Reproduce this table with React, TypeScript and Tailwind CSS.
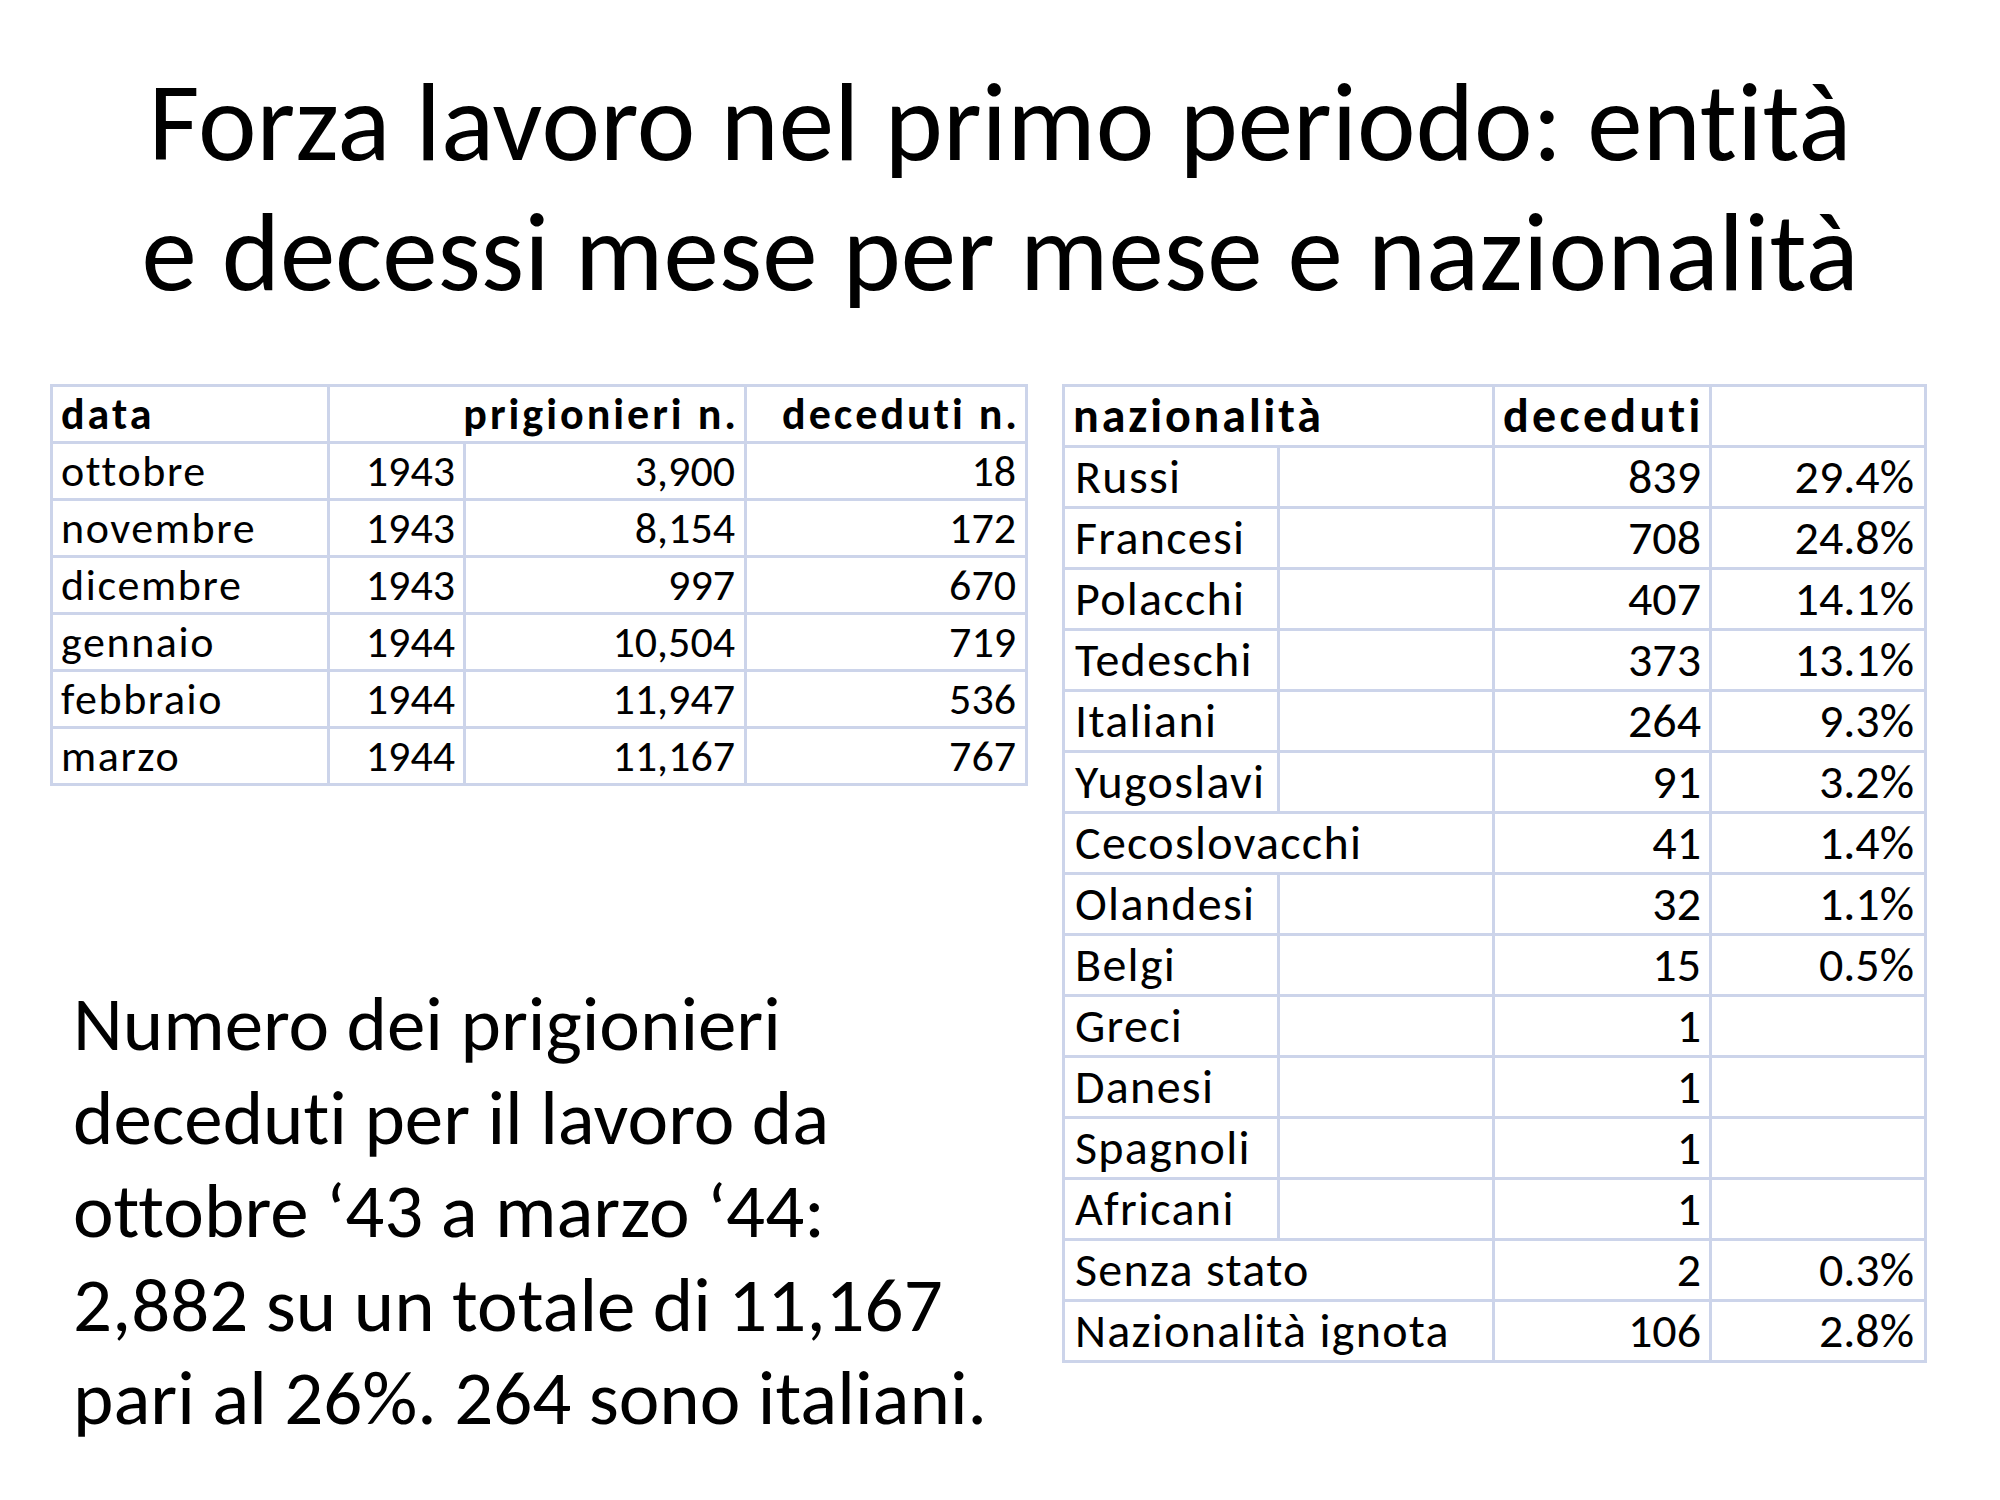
import React from 'react';

const font = "font-[Carlito,Lato,sans-serif] [font-variant-ligatures:none]";

const months = [
  { month: 'ottobre', year: '1943', prisoners: '3,900', dead: '18' },
  { month: 'novembre', year: '1943', prisoners: '8,154', dead: '172' },
  { month: 'dicembre', year: '1943', prisoners: '997', dead: '670' },
  { month: 'gennaio', year: '1944', prisoners: '10,504', dead: '719' },
  { month: 'febbraio', year: '1944', prisoners: '11,947', dead: '536' },
  { month: 'marzo', year: '1944', prisoners: '11,167', dead: '767' },
];

// wide = name spans the first two columns
const nations = [
  { name: 'Russi', dead: '839', pct: '29.4%' },
  { name: 'Francesi', dead: '708', pct: '24.8%' },
  { name: 'Polacchi', dead: '407', pct: '14.1%' },
  { name: 'Tedeschi', dead: '373', pct: '13.1%' },
  { name: 'Italiani', dead: '264', pct: '9.3%' },
  { name: 'Yugoslavi', dead: '91', pct: '3.2%' },
  { name: 'Cecoslovacchi', dead: '41', pct: '1.4%', wide: true },
  { name: 'Olandesi', dead: '32', pct: '1.1%' },
  { name: 'Belgi', dead: '15', pct: '0.5%' },
  { name: 'Greci', dead: '1', pct: '' },
  { name: 'Danesi', dead: '1', pct: '' },
  { name: 'Spagnoli', dead: '1', pct: '' },
  { name: 'Africani', dead: '1', pct: '' },
  { name: 'Senza stato', dead: '2', pct: '0.3%', wide: true },
  { name: 'Nazionalità ignota', dead: '106', pct: '2.8%', wide: true },
];

function MonthTable() {
  const cell = 'bg-white flex items-center whitespace-nowrap';
  return (
    <div className="grid grid-cols-[274px_133px_278px_278px] auto-rows-[54px] gap-[3px] p-[3px] bg-[#ccd4ea] text-[44px] text-black w-fit">
      <div className={`${cell} pl-[8px] font-bold tracking-[3px]`}>data</div>
      <div className={`${cell} col-span-2 justify-end pr-[5px] font-bold tracking-[3px]`}>prigionieri n.</div>
      <div className={`${cell} justify-end pr-[5px] font-bold tracking-[3px]`}>deceduti n.</div>
      {months.map((m) => (
        <React.Fragment key={m.month}>
          <div className={`${cell} pl-[8px] tracking-[1.6px]`}>{m.month}</div>
          <div className={`${cell} justify-end pr-[8px]`}>{m.year}</div>
          <div className={`${cell} justify-end pr-[9px]`}>{m.prisoners}</div>
          <div className={`${cell} justify-end pr-[9px]`}>{m.dead}</div>
        </React.Fragment>
      ))}
    </div>
  );
}

function NationTable() {
  const cell = 'bg-white flex items-center whitespace-nowrap';
  return (
    <div className="grid grid-cols-[212px_212px_214px_212px] auto-rows-[58px] gap-[3px] p-[3px] bg-[#ccd4ea] text-[48px] text-black w-fit">
      <div className={`${cell} col-span-2 pl-[8px] font-bold tracking-[2.9px]`}>nazionalità</div>
      <div className={`${cell} pl-[8px] font-bold tracking-[3.3px]`}>deceduti</div>
      <div className={cell} />
      {nations.map((n) => (
        <React.Fragment key={n.name}>
          {n.wide ? (
            <div className={`${cell} col-span-2 pl-[10px] tracking-[1.3px]`}>{n.name}</div>
          ) : (
            <>
              <div className={`${cell} pl-[10px] tracking-[1.3px]`}>{n.name}</div>
              <div className={cell} />
            </>
          )}
          <div className={`${cell} justify-end pr-[8px]`}>{n.dead}</div>
          <div className={`${cell} justify-end pr-[10px]`}>{n.pct}</div>
        </React.Fragment>
      ))}
    </div>
  );
}

export default function App() {
  return (
    <div className={`${font} w-[2000px] h-[1500px] bg-white text-black overflow-hidden`}>
      <h1 className="pt-[57px] text-center text-[111px] leading-[130px] font-normal">
        Forza lavoro nel primo periodo: entità
        <br />
        e decessi mese per mese e nazionalità
      </h1>

      <div className="mt-[67px] flex items-start pl-[50px] gap-[34px]">
        <div className="flex flex-col">
          <MonthTable />
          <p className="mt-[192px] pl-[23px] text-[77px] leading-[93.5px]">
            Numero dei prigionieri
            <br />
            deceduti per il lavoro da
            <br />
            ottobre ‘43 a marzo ‘44:
            <br />
            2,882 su un totale di 11,167
            <br />
            pari al 26%. 264 sono italiani.
          </p>
        </div>
        <NationTable />
      </div>
    </div>
  );
}
